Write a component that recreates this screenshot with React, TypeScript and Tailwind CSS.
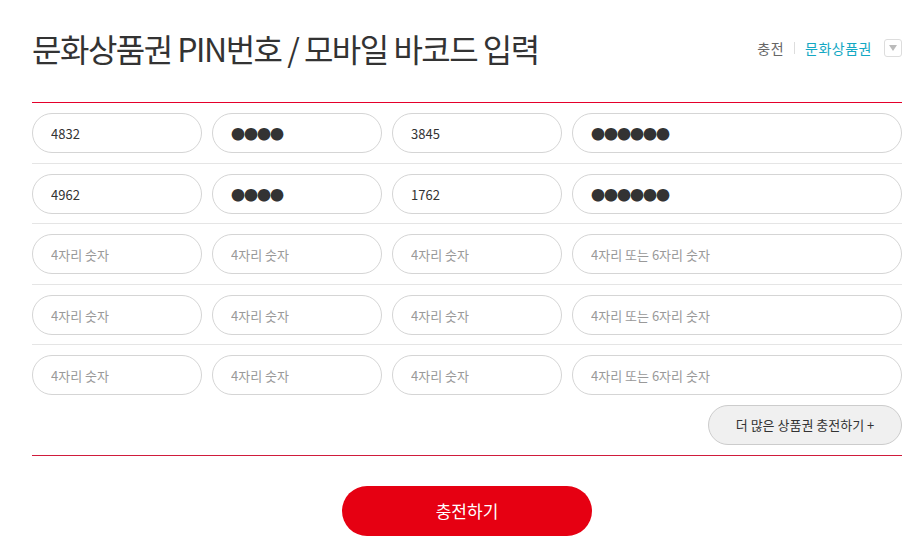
import { useState } from 'react';

const rows = [
  ['4832', '●●●●', '3845', '●●●●●●'],
  ['4962', '●●●●', '1762', '●●●●●●'],
  ['', '', '', ''],
  ['', '', '', ''],
  ['', '', '', ''],
];

const PinInput = ({ value, wide, dots }: any) => (
  <input
    type="text"
    readOnly
    value={value}
    placeholder={wide ? '4자리 또는 6자리 숫자' : '4자리 숫자'}
    className={`${wide ? 'w-[330px]' : 'w-[170px]'} h-[40px] shrink-0 rounded-full border border-[#d5d5d5] bg-white pl-[18px] outline-none text-[#333] placeholder:text-[#999] ${dots ? 'text-[14px] tracking-[-1px]' : 'text-[13px]'}`}
  />
);

const App = () => {
  const [open, setOpen] = useState(false);

  return (
    <div className="w-[923px] min-h-[558px] bg-white" style={{ fontFamily: '"Noto Sans CJK KR", "Noto Sans", sans-serif' }}>
      <div className="ml-[32px] w-[870px]">
        <div className="h-[103px] flex justify-between items-start pt-[26px] border-b border-[#e4002b]">
          <h2 className="text-[32px] leading-[44px] tracking-[-1.5px] text-[#333] font-normal">문화상품권 PIN번호 / 모바일 바코드 입력</h2>
          <div className="flex items-center h-[44px] text-[14px]">
            <span className="text-[#666] tracking-[0.5px]">충전</span>
            <span className="mx-[10px] w-px h-[12px] bg-[#ddd]"></span>
            <span className="text-[#13a8c3] tracking-[0.5px]">문화상품권</span>
            <button
              className="ml-[12px] w-[18px] h-[18px] border border-[#ddd] rounded-[3px] flex items-center justify-center"
              onClick={() => setOpen(!open)}
            >
              <svg width="8" height="6" viewBox="0 0 8 6">
                <path d="M0 0 H8 L4 6 Z" fill="#bbb" />
              </svg>
            </button>
          </div>
        </div>

        <div className="border-b border-[#d01c3c]">
          {rows.map((row, index) => (
            <div
              key={index}
              className={`flex gap-[10px] pt-[10px] ${index % 2 === 1 ? 'pb-[9px]' : 'pb-[10px]'} ${index < rows.length - 1 ? 'border-b border-[#e5e5e5]' : ''}`}
            >
              {row.map((val, i) => (
                <PinInput key={i} value={val} wide={i === 3} dots={val.startsWith('●')} />
              ))}
            </div>
          ))}
          <div className="flex justify-end pb-[10px]">
            <button className="w-[194px] h-[40px] rounded-full border border-[#ccc] bg-[#f0f0f0] text-[13px] text-[#333]">
              더 많은 상품권 충전하기 +
            </button>
          </div>
        </div>

        <div className="flex justify-center mt-[30px]">
          <button className="w-[250px] h-[50px] rounded-full bg-[#e60012] text-white text-[17px]">충전하기</button>
        </div>
      </div>
    </div>
  );
};

export default App;
